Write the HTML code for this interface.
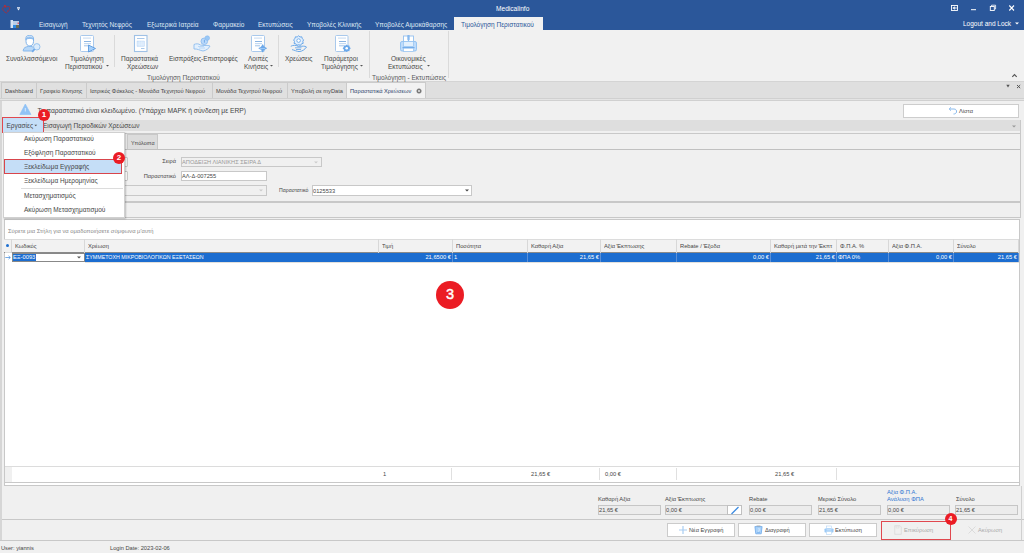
<!DOCTYPE html>
<html><head><meta charset="utf-8">
<style>
*{box-sizing:border-box;margin:0;padding:0}
html,body{width:1024px;height:553px;overflow:hidden;background:#f0f0f0;font-family:"Liberation Sans",sans-serif;color:#464646}
.a{position:absolute}
.t{position:absolute;white-space:nowrap;line-height:8px;height:8px;font-size:6.5px}
.badge{position:absolute;border-radius:50%;background:#eb1c24;color:#fff;text-align:center;font-weight:bold}
</style></head><body>
<!-- title bar -->
<div class="a" style="left:0;top:0;width:1024px;height:30px;background:#2b579a"></div>
<div class="t" style="left:496px;top:5px;color:#fff;font-size:6.6px">Medicalinfo</div>

<!-- ribbon tabs -->
<div class="t" style="left:39px;top:21px;color:#dfe8f4">Εισαγωγή</div>
<div class="t" style="left:82px;top:21px;color:#dfe8f4">Τεχνητός Νεφρός</div>
<div class="t" style="left:147px;top:21px;color:#dfe8f4">Εξωτερικά Ιατρεία</div>
<div class="t" style="left:213px;top:21px;color:#dfe8f4">Φαρμακείο</div>
<div class="t" style="left:258px;top:21px;color:#dfe8f4">Εκτυπώσεις</div>
<div class="t" style="left:307px;top:21px;color:#dfe8f4">Υποβολές Κλινικής</div>
<div class="t" style="left:375px;top:21px;color:#dfe8f4">Υποβολές Αιμοκάθαρσης</div>
<div class="a" style="left:454px;top:17px;width:89px;height:14px;background:#f1f1f1"></div>
<div class="t" style="left:461px;top:21px;color:#2b579a">Τιμολόγηση Περιστατικού</div>
<div class="t" style="left:963px;top:20px;color:#fff">Logout and Lock</div>

<!-- ribbon body -->
<div class="a" style="left:0;top:30px;width:1024px;height:51px;background:#f1f1f1"></div>
<div class="a" style="left:0;top:81px;width:1024px;height:1px;background:#d4d4d4"></div>

<div class="t" style="left:6px;top:55px">Συναλλασσόμενοι</div>
<div class="t" style="left:70px;top:55px">Τιμολόγηση</div>
<div class="t" style="left:65px;top:63px">Περιστατικού</div>
<div class="a" style="left:114px;top:35px;width:1px;height:32px;background:#dadada"></div>
<div class="t" style="left:121px;top:55px">Παραστατικά</div>
<div class="t" style="left:127px;top:63px">Χρεώσεων</div>
<div class="t" style="left:169px;top:55px">Εισπράξεις-Επιστροφές</div>
<div class="t" style="left:248px;top:55px">Λοιπές</div>
<div class="t" style="left:244px;top:63px">Κινήσεις</div>
<div class="a" style="left:278px;top:35px;width:1px;height:32px;background:#dadada"></div>
<div class="t" style="left:285px;top:55px">Χρεώσεις</div>
<div class="t" style="left:324px;top:55px">Παράμετροι</div>
<div class="t" style="left:321px;top:63px">Τιμολόγησης</div>
<div class="t" style="left:147px;top:73.5px;color:#5a5a5a">Τιμολόγηση Περιστατικού</div>
<div class="a" style="left:369px;top:31px;width:1px;height:47px;background:#dadada"></div>
<div class="t" style="left:391px;top:55px">Οικονομικές</div>
<div class="t" style="left:388px;top:63px">Εκτυπώσεις</div>
<div class="t" style="left:372px;top:73.5px;color:#5a5a5a">Τιμολόγηση - Εκτυπώσεις</div>
<div class="a" style="left:448px;top:31px;width:1px;height:47px;background:#dadada"></div>

<!-- doc tabs -->
<div class="a" style="left:0;top:82px;width:1024px;height:17px;background:#dfdfdf"></div>
<div class="a" style="left:1px;top:82px;width:36px;height:17px;background:#e0e0e0;border:1px solid #cbcbcb;border-bottom:none"></div>
<div class="t" style="left:5px;top:87px;font-size:5.7px;color:#444">Dashboard</div>
<div class="a" style="left:36px;top:82px;width:51px;height:17px;background:#e0e0e0;border:1px solid #cbcbcb;border-bottom:none"></div>
<div class="t" style="left:40px;top:87px;font-size:5.7px;color:#444">Γραφείο Κίνησης</div>
<div class="a" style="left:86px;top:82px;width:127px;height:17px;background:#e0e0e0;border:1px solid #cbcbcb;border-bottom:none"></div>
<div class="t" style="left:90px;top:87px;font-size:5.7px;color:#444">Ιατρικός Φάκελος - Μονάδα Τεχνητού Νεφρού</div>
<div class="a" style="left:212px;top:82px;width:76px;height:17px;background:#e0e0e0;border:1px solid #cbcbcb;border-bottom:none"></div>
<div class="t" style="left:216px;top:87px;font-size:5.7px;color:#444">Μονάδα Τεχνητού Νεφρού</div>
<div class="a" style="left:287px;top:82px;width:61px;height:17px;background:#e0e0e0;border:1px solid #cbcbcb;border-bottom:none"></div>
<div class="t" style="left:291px;top:87px;font-size:5.7px;color:#444">Υποβολή σε myData</div>
<div class="a" style="left:346px;top:82px;width:80px;height:17px;background:#f2f2f2;border:1px solid #cbcbcb;border-bottom:none"></div>
<div class="t" style="left:350px;top:87px;font-size:5.7px;color:#2b3f6b">Παραστατικά Χρεώσεων</div>
<div class="a" style="left:0;top:98px;width:1024px;height:1px;background:#d0d0d0"></div><div class="a" style="left:0;top:99px;width:1024px;height:1px;background:#e4e4e4"></div><div class="a" style="left:0;top:100px;width:1024px;height:1px;background:#d0d0d0"></div>

<!-- content -->
<div class="a" style="left:0px;top:101px;width:2px;height:439px;background:#d6d6d6"></div>
<div class="t" style="left:37.5px;top:106.5px;font-size:6.7px">Το παραστατικό είναι κλειδωμένο. (Υπάρχει ΜΑΡΚ ή σύνδεση με ERP)</div>
<div class="a" style="left:903px;top:104px;width:116px;height:14px;background:#fff;border:1px solid #cdcdcd"></div>
<div class="t" style="left:959px;top:107px;font-size:5.7px">Λίστα</div>
<div class="a" style="left:4px;top:120px;width:1016px;height:11px;background:#dedede"></div>
<div class="t" style="left:43px;top:122px">Εισαγωγή Περιοδικών Χρεώσεων</div>


<!-- toolbar outline -->
<div class="a" style="left:4px;top:133px;width:1016px;height:1px;background:#c8c8c8"></div>
<!-- tab strip & form -->
<div class="a" style="left:4px;top:134px;width:1016px;height:15px;background:#f0f0f0"></div>
<div class="a" style="left:127px;top:134px;width:31px;height:15px;background:#dcdcdc;border:1px solid #c8c8c8;border-bottom:none"></div>
<div class="t" style="left:131px;top:139px;font-size:5.35px">Υπόλοιπα</div>
<div class="a" style="left:118px;top:157px;width:10px;height:10px;background:#f7f7f7;border:1px solid #c8c8c8;border-radius:1px"></div>
<div class="a" style="left:118px;top:171px;width:10px;height:10px;background:#fff;border:1px solid #c8c8c8;border-radius:1px"></div>
<div class="a" style="left:4px;top:149px;width:1016px;height:1px;background:#c0c0c0"></div>
<div class="t" style="left:135px;width:41px;text-align:right;top:157px;font-size:5.7px">Σειρά</div>
<div class="a" style="left:181px;top:157px;width:141px;height:10px;background:#f0f0f0;border:1px solid #c8c8c8"></div>
<div class="t" style="left:182px;top:158px;font-size:5.7px;color:#999">ΑΠΟΔΕΙΞΗ ΛΙΑΝΙΚΗΣ ΣΕΙΡΑ Δ</div>
<div class="t" style="left:135px;width:41px;text-align:right;top:172px;font-size:5.7px">Παραστατικό</div>
<div class="a" style="left:181px;top:171px;width:86px;height:10px;background:#fff;border:1px solid #c8c8c8"></div>
<div class="t" style="left:182px;top:172px;font-size:5.7px">ΑΛ-Δ-007255</div>
<div class="a" style="left:120px;top:185px;width:147px;height:11px;background:#f0f0f0;border:1px solid #c8c8c8"></div>
<div class="t" style="left:279px;top:186px;font-size:5.2px">Παραστατικό</div>
<div class="a" style="left:312px;top:185px;width:160px;height:11px;background:#fff;border:1px solid #c8c8c8"></div>
<div class="t" style="left:313px;top:187px;font-size:5.7px">0125533</div>
<div class="a" style="left:4px;top:201px;width:1016px;height:2px;background:#c8c8c8"></div>
<div class="a" style="left:4px;top:217px;width:1016px;height:1px;background:#c8c8c8"></div>

<div class="a" style="left:1020px;top:120px;width:1px;height:98px;background:#c8c8c8"></div>
<!-- grid panel -->
<div class="a" style="left:4px;top:219px;width:1016px;height:267px;background:#fff;border:1px solid #c8c8c8"></div>
<div class="t" style="left:8px;top:227px;font-size:5.8px;color:#888">Σύρετε μια Στήλη για να ομαδοποιήσετε σύμφωνα μ'αυτή</div>

<div class="a" style="left:4px;top:239px;width:1015px;height:14px;background:#f2f2f2;border-top:1px solid #dcdcdc;border-bottom:1px solid #8a8a8a"></div>
<div class="a" style="left:85px;top:262px;width:934px;height:1px;background:#e2e0dc"></div>
<div class="a" style="left:5px;top:252px;width:7px;height:1px;background:#dcdcdc"></div>
<div class="a" style="left:11px;top:239px;width:1px;height:14px;background:#d8d8d8"></div>
<div class="a" style="left:84px;top:239px;width:1px;height:14px;background:#d8d8d8"></div>
<div class="t" style="left:15px;top:242px;font-size:5.75px;width:69px;overflow:hidden">Κωδικός</div>
<div class="a" style="left:378px;top:239px;width:1px;height:14px;background:#d8d8d8"></div>
<div class="t" style="left:88px;top:242px;font-size:5.75px;width:290px;overflow:hidden">Χρέωση</div>
<div class="a" style="left:452px;top:239px;width:1px;height:14px;background:#d8d8d8"></div>
<div class="t" style="left:382px;top:242px;font-size:5.75px;width:70px;overflow:hidden">Τιμή</div>
<div class="a" style="left:527px;top:239px;width:1px;height:14px;background:#d8d8d8"></div>
<div class="t" style="left:456px;top:242px;font-size:5.75px;width:71px;overflow:hidden">Ποσότητα</div>
<div class="a" style="left:600px;top:239px;width:1px;height:14px;background:#d8d8d8"></div>
<div class="t" style="left:531px;top:242px;font-size:5.75px;width:69px;overflow:hidden">Καθαρή Αξία</div>
<div class="a" style="left:676px;top:239px;width:1px;height:14px;background:#d8d8d8"></div>
<div class="t" style="left:604px;top:242px;font-size:5.75px;width:72px;overflow:hidden">Αξία Έκπτωσης</div>
<div class="a" style="left:770px;top:239px;width:1px;height:14px;background:#d8d8d8"></div>
<div class="t" style="left:680px;top:242px;font-size:5.75px;width:90px;overflow:hidden">Rebate / Έξοδα</div>
<div class="a" style="left:836px;top:239px;width:1px;height:14px;background:#d8d8d8"></div>
<div class="t" style="left:774px;top:242px;font-size:5.75px;width:62px;overflow:hidden">Καθαρή μετά την Έκπτ</div>
<div class="a" style="left:888px;top:239px;width:1px;height:14px;background:#d8d8d8"></div>
<div class="t" style="left:840px;top:242px;font-size:5.75px;width:48px;overflow:hidden">Φ.Π.Α. %</div>
<div class="a" style="left:953px;top:239px;width:1px;height:14px;background:#d8d8d8"></div>
<div class="t" style="left:892px;top:242px;font-size:5.75px;width:61px;overflow:hidden">Αξία Φ.Π.Α.</div>
<div class="a" style="left:1018px;top:239px;width:1px;height:14px;background:#d8d8d8"></div>
<div class="t" style="left:957px;top:242px;font-size:5.75px;width:61px;overflow:hidden">Σύνολο</div>
<div class="a" style="left:6px;top:244px;width:3px;height:3px;border-radius:50%;background:#1e6fd0"></div>
<div class="a" style="left:85px;top:253px;width:934px;height:9px;background:#1c6dd0"></div>
<div class="a" style="left:452px;top:253px;width:1px;height:9px;background:#5a8fd6"></div>
<div class="a" style="left:527px;top:253px;width:1px;height:9px;background:#5a8fd6"></div>
<div class="a" style="left:600px;top:253px;width:1px;height:9px;background:#5a8fd6"></div>
<div class="a" style="left:676px;top:253px;width:1px;height:9px;background:#5a8fd6"></div>
<div class="a" style="left:770px;top:253px;width:1px;height:9px;background:#5a8fd6"></div>
<div class="a" style="left:836px;top:253px;width:1px;height:9px;background:#5a8fd6"></div>
<div class="a" style="left:888px;top:253px;width:1px;height:9px;background:#5a8fd6"></div>
<div class="a" style="left:953px;top:253px;width:1px;height:9px;background:#5a8fd6"></div>
<div class="a" style="left:1018px;top:253px;width:1px;height:9px;background:#5a8fd6"></div>
<div class="a" style="left:12px;top:253px;width:73px;height:9px;background:#fff;border:1px solid #888"></div>
<div class="a" style="left:13px;top:254px;width:23px;height:7px;background:#1c6dd0"></div>
<div class="t" style="left:13px;top:254px;font-size:5.75px;line-height:7px;color:#fff">ΕΞ-0093</div>
<div class="t" style="left:86px;top:254px;font-size:5.3px;line-height:7px;color:#fff">ΣΥΜΜΕΤΟΧΗ ΜΙΚΡΟΒΙΟΛΟΓΙΚΩΝ ΕΞΕΤΑΣΕΩΝ</div>
<div class="t" style="left:379px;width:72px;text-align:right;top:254px;font-size:5.75px;line-height:7px;color:#fff">21,6500 €</div>
<div class="t" style="left:454px;top:254px;font-size:5.75px;line-height:7px;color:#fff">1</div>
<div class="t" style="left:528px;width:71px;text-align:right;top:254px;font-size:5.75px;line-height:7px;color:#fff">21,65 €</div>
<div class="t" style="left:677px;width:92px;text-align:right;top:254px;font-size:5.75px;line-height:7px;color:#fff">0,00 €</div>
<div class="t" style="left:771px;width:64px;text-align:right;top:254px;font-size:5.75px;line-height:7px;color:#fff">21,65 €</div>
<div class="t" style="left:838px;top:254px;font-size:5.75px;line-height:7px;color:#fff">ΦΠΑ 0%</div>
<div class="t" style="left:889px;width:63px;text-align:right;top:254px;font-size:5.75px;line-height:7px;color:#fff">0,00 €</div>
<div class="t" style="left:954px;width:63px;text-align:right;top:254px;font-size:5.75px;line-height:7px;color:#fff">21,65 €</div>
<div class="a" style="left:5px;top:466px;width:1014px;height:1px;background:#dcdcdc"></div>
<div class="a" style="left:5px;top:467px;width:7px;height:15px;background:#f0f0f0"></div>
<div class="a" style="left:5px;top:482px;width:1014px;height:1px;background:#c8c8c8"></div>
<div class="a" style="left:451px;top:468px;width:1px;height:12px;background:#e0e0e0"></div>
<div class="a" style="left:599px;top:468px;width:1px;height:12px;background:#e0e0e0"></div>
<div class="t" style="left:383px;top:470px;font-size:5.75px">1</div>
<div class="t" style="left:531px;top:470px;font-size:5.75px">21,65 €</div>
<div class="t" style="left:605px;top:470px;font-size:5.75px">0,00 €</div>
<div class="t" style="left:775px;top:470px;font-size:5.75px">21,65 €</div>
<!-- status bar -->
<div class="a" style="left:676px;top:468px;width:1px;height:12px;background:#e0e0e0"></div>
<div class="a" style="left:836px;top:468px;width:1px;height:12px;background:#e0e0e0"></div>
<!-- summary -->
<div class="a" style="left:4px;top:485px;width:1016px;height:1px;background:#c8c8c8"></div>
<div class="t" style="left:598px;top:495px;font-size:5.75px">Καθαρή Αξία</div>
<div class="a" style="left:598px;top:505px;width:63px;height:10px;background:#ececec;border:1px solid #c6c6c6"></div>
<div class="t" style="left:599px;top:506px;font-size:5.7px">21,65 €</div>
<div class="t" style="left:665px;top:495px;font-size:5.75px">Αξία Έκπτωσης</div>
<div class="a" style="left:665px;top:505px;width:63px;height:10px;background:#ececec;border:1px solid #c6c6c6"></div>
<div class="a" style="left:727px;top:505px;width:15px;height:10px;background:#fff;border:1px solid #c0c0c0"></div>
<div class="t" style="left:666px;top:506px;font-size:5.7px">0,00 €</div>
<div class="t" style="left:749px;top:495px;font-size:5.75px">Rebate</div>
<div class="a" style="left:749px;top:505px;width:63px;height:10px;background:#ececec;border:1px solid #c6c6c6"></div>
<div class="t" style="left:750px;top:506px;font-size:5.7px">0,00 €</div>
<div class="t" style="left:818px;top:495px;font-size:5.75px">Μερικό Σύνολο</div>
<div class="a" style="left:818px;top:505px;width:63px;height:10px;background:#ececec;border:1px solid #c6c6c6"></div>
<div class="t" style="left:819px;top:506px;font-size:5.7px">21,65 €</div>
<div class="t" style="left:887px;top:487.5px;font-size:5.75px;color:#2e75d0">Αξία Φ.Π.Α.</div>
<div class="t" style="left:887px;top:494.5px;font-size:5.75px;color:#2e75d0">Ανάλυση ΦΠΑ</div>
<div class="a" style="left:887px;top:505px;width:63px;height:10px;background:#ececec;border:1px solid #c6c6c6"></div>
<div class="t" style="left:888px;top:506px;font-size:5.7px">0,00 €</div>
<div class="t" style="left:956px;top:495px;font-size:5.75px">Σύνολο</div>
<div class="a" style="left:955px;top:505px;width:63px;height:10px;background:#ececec;border:1px solid #c6c6c6"></div>
<div class="t" style="left:956px;top:506px;font-size:5.7px">21,65 €</div>
<div class="a" style="left:2px;top:519px;width:1022px;height:1px;background:#c8c8c8"></div>
<div class="a" style="left:1021px;top:486px;width:1px;height:54px;background:#d0d0d0"></div>
<!-- buttons -->
<div class="a" style="left:667px;top:523px;width:68px;height:14px;background:#fff;border:1px solid #cbcbcb"></div>
<div class="t" style="left:689px;top:526px;font-size:5.7px">Νέα Εγγραφή</div>
<div class="a" style="left:738px;top:523px;width:68px;height:14px;background:#fff;border:1px solid #cbcbcb"></div>
<div class="t" style="left:765px;top:526px;font-size:5.7px">Διαγραφή</div>
<div class="a" style="left:809px;top:523px;width:68px;height:14px;background:#fff;border:1px solid #cbcbcb"></div>
<div class="t" style="left:835px;top:526px;font-size:5.7px">Εκτύπωση</div>
<div class="a" style="left:881px;top:521px;width:70px;height:19px;border:1px solid #e0484f"></div>
<div class="t" style="left:904px;top:526px;font-size:5.7px;color:#aaa">Επικύρωση</div>
<div class="t" style="left:978px;top:526px;font-size:5.7px;color:#aaa">Ακύρωση</div>
<div class="a" style="left:0px;top:540px;width:1024px;height:1px;background:#c8c8c8"></div>
<div class="t" style="left:1px;top:544px;font-size:5.7px">User: yiannis</div>
<div class="t" style="left:110px;top:544px;font-size:5.7px">Login Date: 2023-02-06</div>



<!-- ICONS -->
<!-- logo -->
<svg class="a" style="left:1px;top:3px" width="11" height="11" viewBox="0 0 11 11"><path d="M5.8 10.3 C3.5 9 1.5 7.5 1.6 5.5 C1.7 4 3.2 3.5 4.5 4.6 C5.5 3.2 8.5 2.8 8.8 4.6 C9 6.5 7.5 8 6 9.5" fill="none" stroke="#b8282c" stroke-width="0.7"/><circle cx="4" cy="2.8" r="0.9" fill="#c42a2e"/><path d="M3.2 2.3 L5 3.8" stroke="#c42a2e" stroke-width="0.8"/><circle cx="6.5" cy="8" r="0.5" fill="#c42a2e"/></svg>
<svg class="a" style="left:17px;top:7px" width="3" height="4" viewBox="0 0 3 4"><rect x="0" y="0" width="3" height="1.5" fill="#c0cde3"/><path d="M0.2 1.5 H2.8 L1.5 3.5Z" fill="#f0f4fa"/></svg>
<!-- ribbon app icon -->
<svg class="a" style="left:10px;top:20px" width="10" height="9" viewBox="0 0 10 9"><rect x="0.5" y="0" width="2.5" height="8" fill="#d6e2f2"/><rect x="3" y="1" width="6" height="4" fill="#b9cde8"/><rect x="3" y="5" width="3" height="3" fill="#2d8ae6"/><rect x="6" y="5" width="3" height="3" fill="#6b6b55"/><rect x="7.5" y="2.5" width="1.5" height="1.5" fill="#e06070"/></svg>
<!-- window controls -->
<svg class="a" style="left:950px;top:4px" width="70" height="8" viewBox="0 0 70 8"><rect x="1.5" y="1.5" width="6" height="5" fill="none" stroke="#fff" stroke-width="0.9"/><path d="M2.8 4 L4.6 2.7 V5.3Z M4.5 4 H6.5 M6 3.2 V4.8" stroke="#fff" stroke-width="0.6" fill="#fff"/><rect x="21" y="5.2" width="5" height="1" fill="#fff"/><rect x="40.3" y="2.5" width="4" height="4" fill="none" stroke="#fff" stroke-width="0.9"/><path d="M41.5 2.3 V1.2 H45.6 V5 H44.6" fill="none" stroke="#fff" stroke-width="0.8"/><path d="M59.3 1.5 L64 6.5 M64 1.5 L59.3 6.5" stroke="#fff" stroke-width="1.1"/></svg>
<svg class="a" style="left:1015px;top:22px" width="4" height="3" viewBox="0 0 4 3"><path d="M0 0.5 H4 L2 2.5Z" fill="#fff"/></svg>
<!-- ribbon icons -->
<svg class="a" style="left:22px;top:34.7px" width="20" height="19" viewBox="0 0 20 19"><path d="M4 2.5 C4 0 10.5 -0.5 11.5 2.5 L11.5 6.5 C11.5 9.5 9.5 11 7.8 11 C6 11 4 9.5 4 6.5 Z" fill="#fff" stroke="#7eb2ea" stroke-width="1"/><path d="M3.8 4.5 C3.8 1 11.6 1 11.6 4.5 C10 3 6 3 3.8 4.5Z" fill="#9cc6f2" stroke="#7eb2ea" stroke-width="0.8"/><path d="M1.2 15.5 C1.5 12.5 4 11.8 6.5 11.4 L9 11.4 C11 11.8 12.5 12.5 13 13.8 L10.5 16 L1.2 16 Z" fill="#b8d8f8" stroke="#7eb2ea" stroke-width="0.9"/><circle cx="14.8" cy="11.8" r="3.2" fill="#dcecfc" stroke="#8fbdec" stroke-width="0.9"/><path d="M12.6 14.2 L10.2 16.8" stroke="#6fa8e8" stroke-width="1.7"/></svg>
<svg class="a" style="left:79px;top:34px" width="18" height="19" viewBox="0 0 18 19"><rect x="1.5" y="1.5" width="13" height="16" rx="1" fill="#fff" stroke="#a9c9ec" stroke-width="1"/><rect x="4" y="3.5" width="8" height="1.2" fill="#cfe0f3"/><rect x="5" y="7" width="7" height="1" fill="#8cb5e2"/><rect x="5" y="9" width="7" height="1.2" fill="#c5daf1"/><rect x="5" y="11.3" width="5" height="1" fill="#a3c4e8"/><path d="M9.5 11 L16.5 14.5 L9.5 18Z" fill="#a6d0fa" stroke="#5a9ae0" stroke-width="0.9"/></svg>
<svg class="a" style="left:133px;top:34px" width="16" height="19" viewBox="0 0 16 19"><rect x="1.5" y="1.5" width="12.5" height="16" fill="#fff" stroke="#9fc1e6" stroke-width="1.1"/><rect x="4" y="4" width="7.5" height="1" fill="#a9c8ea"/><rect x="4" y="7" width="7.5" height="5.5" fill="#cfe4fb" stroke="#b3d3f5" stroke-width="0.4"/><path d="M6.2 7 V12.5 M8.2 7 V12.5 M10 7 V12.5 M4 9 H11.5 M4 10.8 H11.5" stroke="#eef6fe" stroke-width="0.5"/><rect x="8" y="14" width="3.5" height="1" fill="#a9c8ea"/></svg>
<svg class="a" style="left:193px;top:35px" width="19" height="18" viewBox="0 0 19 18"><circle cx="11.3" cy="6.3" r="3.3" fill="#b9d9fb" stroke="#86b8ee" stroke-width="0.8"/><rect x="10.9" y="4.7" width="0.9" height="3" fill="#6da6e6"/><circle cx="14.3" cy="3.1" r="2.3" fill="#9ac8f6" stroke="#86b8ee" stroke-width="0.6"/><path d="M1 9.5 C3 8.5 5.5 8.5 7.5 10 L11 10.5 C14 10.5 16.5 10.5 17 11 C16 13.5 13 15.5 10 16 C7 15.5 4 13.5 1 14 Z" fill="#e3f0fd" stroke="#8dbcee" stroke-width="0.9"/><path d="M5 11.5 H11 M6 13 H12" stroke="#a6cdf4" stroke-width="0.7"/></svg>
<svg class="a" style="left:250px;top:34px" width="18" height="19" viewBox="0 0 18 19"><rect x="1.5" y="1.5" width="13" height="16" rx="1" fill="#fff" stroke="#a9c9ec" stroke-width="1"/><rect x="4" y="3.5" width="8" height="1.2" fill="#cfe0f3"/><rect x="5" y="7" width="7" height="1" fill="#8cb5e2"/><rect x="5" y="9" width="7" height="1.2" fill="#c5daf1"/><rect x="5" y="11.3" width="5" height="1" fill="#a3c4e8"/><path d="M12.7 10.5 L14.2 13 L16.7 14.3 L14.2 15.6 L12.7 18.2 L11.2 15.6 L8.7 14.3 L11.2 13Z" fill="#6aa8ea" stroke="#5a9ae0" stroke-width="0.5"/><rect x="10" y="14" width="5" height="0.8" fill="#a9d0f8"/></svg>
<svg class="a" style="left:290px;top:35px" width="18" height="18" viewBox="0 0 18 18"><path d="M8.6 0.8 L10 2 L11.8 1.8 L12.2 3.6 L13.6 4.8 L12.8 6.5 L13.2 8.3 L11.5 8.8 L10.5 10.3 L8.6 9.7 L6.8 10.3 L5.8 8.8 L4 8.3 L4.5 6.5 L3.6 4.8 L5 3.6 L5.4 1.8 L7.2 2Z" fill="#e3effc" stroke="#5fa2e8" stroke-width="0.9"/><circle cx="8.6" cy="5.6" r="1.8" fill="#fff" stroke="#5fa2e8" stroke-width="0.8"/><path d="M0.8 11.3 C3 10 6 10 8 11.3 L12 11.2 C14.5 11 16 11.5 16.5 12 C15 14.5 12 16.5 9 16.6 C7 16.5 4 15 2 14.6" fill="none" stroke="#5fa2e8" stroke-width="0.9"/><path d="M5 12.8 H11.5 M6 14.5 H11" stroke="#5fa2e8" stroke-width="0.8"/></svg>
<svg class="a" style="left:334px;top:34px" width="18" height="19" viewBox="0 0 18 19"><rect x="1.5" y="1.5" width="12.5" height="16" rx="1" fill="#fff" stroke="#a9c9ec" stroke-width="1"/><rect x="4" y="3.5" width="8" height="1.2" fill="#cfe0f3"/><rect x="5" y="7" width="7" height="1" fill="#8cb5e2"/><rect x="5" y="9" width="7" height="1.2" fill="#c5daf1"/><rect x="5" y="11.3" width="5" height="1" fill="#a3c4e8"/><path d="M12.7 10.5 L13.8 11.6 L15.4 11.4 L15.6 13 L16.8 14.3 L15.6 15.6 L15.4 17.2 L13.8 17 L12.7 18.1 L11.6 17 L10 17.2 L9.8 15.6 L8.6 14.3 L9.8 13 L10 11.4 L11.6 11.6Z" fill="#6aa8ea"/><circle cx="12.7" cy="14.3" r="1.3" fill="#fff"/></svg>
<svg class="a" style="left:399px;top:34px" width="19" height="19" viewBox="0 0 19 19"><rect x="4.5" y="2" width="10" height="10" fill="#fff" stroke="#93c0ef" stroke-width="0.9"/><path d="M8.7 1.5 L10.3 1.5 L10.3 5.5 L9.5 7 L8.7 5.5Z" fill="#8fbff2" stroke="#6aa6e8" stroke-width="0.5"/><rect x="1.5" y="7.5" width="16" height="9.5" rx="1.5" fill="#bfdcfb" stroke="#8ec0f2" stroke-width="0.9"/><rect x="4.5" y="7.5" width="10" height="5" fill="#e3f0fd" stroke="#93c0ef" stroke-width="0.7"/><rect x="3.5" y="13.2" width="12" height="1" fill="#5d9ce4"/><rect x="4.5" y="14.2" width="10" height="3.3" fill="#fff" stroke="#93c0ef" stroke-width="0.7"/></svg>
<!-- ribbon dropdown arrows -->
<svg class="a" style="left:0;top:0" width="450" height="80" viewBox="0 0 450 80"><path d="M106 65 H109 L107.5 66.5Z M270 65 H273 L271.5 66.5Z M360 65 H363 L361.5 66.5Z M427 65 H430 L428.5 66.5Z" fill="#555"/></svg>
<!-- collapse caret -->
<svg class="a" style="left:1011px;top:73px" width="7" height="5" viewBox="0 0 7 5"><path d="M1.3 3.8 L3.5 1.6 L5.7 3.8" fill="none" stroke="#555" stroke-width="1.2"/></svg>
<!-- doc tab controls -->
<svg class="a" style="left:1002px;top:83px" width="20" height="7" viewBox="0 0 20 7"><path d="M4.3 1.8 H7.7 L6 4.4Z" fill="#555"/><path d="M15 2 L18.2 5.1 M18.2 2 L15 5.1" stroke="#555" stroke-width="1"/></svg>
<svg class="a" style="left:415.5px;top:88px" width="6" height="6" viewBox="0 0 6 6"><circle cx="3" cy="3" r="2.5" fill="#777"/><path d="M1.8 1.8 L4.2 4.2 M4.2 1.8 L1.8 4.2" stroke="#eee" stroke-width="0.7"/></svg>
<!-- warning -->
<svg class="a" style="left:19px;top:103px" width="13" height="12" viewBox="0 0 13 12"><path d="M6.3 1 L12 11.5 H0.8Z" fill="#91c3f6" stroke="#8bbff5" stroke-width="0.6" stroke-linejoin="round"/><rect x="5.8" y="5" width="1" height="3.5" fill="#d7e9fc"/></svg>
<!-- Λίστα icon -->
<svg class="a" style="left:948px;top:106px" width="10" height="9" viewBox="0 0 10 9"><path d="M1.5 3 H6 C8 3 8.8 4.5 8.5 6 C8.2 7.5 7 8 5.5 8" fill="none" stroke="#7fb3ea" stroke-width="0.9"/><path d="M3 1.3 L1.2 3 L3 4.7" fill="none" stroke="#7fb3ea" stroke-width="0.9"/></svg>
<!-- button icons -->
<svg class="a" style="left:678px;top:525px" width="10" height="10" viewBox="0 0 10 10"><path d="M5 1 V9 M1 5 H9" stroke="#a9cdf2" stroke-width="1.2"/></svg>
<svg class="a" style="left:754px;top:525px" width="9" height="10" viewBox="0 0 9 10"><path d="M0.9 1.6 H8.1 L7.2 8.8 H1.8Z" fill="#a9d2fa" stroke="#6da8e8" stroke-width="0.8"/><rect x="2.5" y="0.6" width="4" height="0.7" fill="#9a9a9a"/><path d="M4.5 3 C5.5 3.5 5.5 5.5 4.5 6.5" stroke="#eaf4fe" stroke-width="0.8" fill="none"/><path d="M3 7.6 H6" stroke="#6da8e8" stroke-width="0.6"/></svg>
<svg class="a" style="left:823.5px;top:525px" width="10" height="10" viewBox="0 0 10 10"><rect x="2.5" y="1" width="5" height="2.5" fill="#fff" stroke="#b5d5f5" stroke-width="0.6"/><rect x="0.5" y="3.5" width="9" height="4" rx="0.8" fill="#9ccaf6"/><rect x="2.5" y="4.5" width="5" height="0.8" fill="#e3f0fd"/><rect x="2.5" y="6.5" width="5" height="3" fill="#fff" stroke="#b5d5f5" stroke-width="0.6"/></svg>
<svg class="a" style="left:894px;top:525px" width="8" height="10" viewBox="0 0 8 10"><path d="M0.7 0.7 H6 L7.3 2 V9.3 H0.7Z" fill="none" stroke="#d8d8d8" stroke-width="0.7"/><rect x="2" y="1" width="3" height="2" fill="none" stroke="#d8d8d8" stroke-width="0.5"/></svg>
<svg class="a" style="left:968px;top:526px" width="8" height="8" viewBox="0 0 8 8"><path d="M0.5 0.5 L7.5 7.5 M7.5 0.5 L0.5 7.5" stroke="#d8d8d8" stroke-width="0.9"/></svg>
<!-- grid glyphs -->
<svg class="a" style="left:5px;top:255px" width="6" height="5" viewBox="0 0 6 5"><path d="M0.3 2.5 H5.2 M3.5 0.8 L5.3 2.5 L3.5 4.2" fill="none" stroke="#3a85d8" stroke-width="0.7"/></svg>
<svg class="a" style="left:77px;top:256px" width="4" height="3" viewBox="0 0 4 3"><path d="M0 0.5 H4 L2 2.5Z" fill="#555"/></svg>
<svg class="a" style="left:464.5px;top:189px" width="4" height="3" viewBox="0 0 4 3"><path d="M0 0.5 H4 L2 2.5Z" fill="#444"/></svg>
<svg class="a" style="left:314px;top:161px" width="4" height="3" viewBox="0 0 4 3"><path d="M0 0.5 H4 L2 2.5Z" fill="#ccc"/></svg>
<svg class="a" style="left:259px;top:189px" width="4" height="3" viewBox="0 0 4 3"><path d="M0 0.5 H4 L2 2.5Z" fill="#ccc"/></svg>
<svg class="a" style="left:1012px;top:125px" width="4" height="3" viewBox="0 0 4 3"><path d="M0 0.5 H4 L2 2.5Z" fill="#999"/></svg>
<svg class="a" style="left:729px;top:506px" width="12" height="9" viewBox="0 0 12 9"><path d="M2.5 8 L9.5 1" stroke="#3a8ae0" stroke-width="1.3"/></svg>

<!-- Εργασίες button -->
<div class="a" style="left:3px;top:118px;width:40px;height:14px;background:#c5def7"></div>
<div class="t" style="left:6.5px;top:122px;font-size:6.5px">Εργασίες</div>
<svg class="a" style="left:34px;top:124px" width="4" height="3" viewBox="0 0 4 3"><path d="M0.3 0.8 H3.2 L1.75 2.3Z" fill="#555"/></svg>
<div class="a" style="left:2px;top:117px;width:42px;height:16px;border:1px solid #e0484f"></div>
<!-- dropdown menu -->
<div class="a" style="left:3px;top:132px;width:122px;height:86px;background:#fff;border:1px solid #d0d0d0;box-shadow:1px 1px 1.5px rgba(0,0,0,0.22)"></div>
<div class="t" style="left:24px;top:135px;font-size:6.5px">Ακύρωση Παραστατικού</div>
<div class="t" style="left:24px;top:149px;font-size:6.5px">Εξόφληση Παραστατικού</div>
<div class="a" style="left:4px;top:159px;width:118px;height:15px;background:#c5def7;border:1px solid #d8454c"></div>
<div class="t" style="left:24px;top:163px;font-size:6.5px">Ξεκλείδωμα Εγγραφής</div>
<div class="t" style="left:24px;top:177px;font-size:6.5px">Ξεκλείδωμα Ημερομηνίας</div>
<div class="a" style="left:21px;top:188px;width:102px;height:1px;background:#dcdcdc"></div>
<div class="t" style="left:24px;top:192px;font-size:6.5px">Μετασχηματισμός</div>
<div class="t" style="left:24px;top:206px;font-size:6.5px">Ακύρωση Μετασχηματισμού</div>

<!-- badges -->
<div class="badge" style="left:38px;top:109px;width:12px;height:12px;font-size:8px;line-height:12px">1</div>
<div class="badge" style="left:113px;top:151.5px;width:12px;height:12px;font-size:8px;line-height:12px">2</div>
<div class="badge" style="left:436px;top:280.5px;width:28px;height:28px;font-size:14.5px;line-height:27px;font-weight:normal;-webkit-text-stroke:0.45px #fff">3</div>
<div class="badge" style="left:944.5px;top:513px;width:12px;height:12px;font-size:7px;line-height:12px">4</div>
</body></html>
